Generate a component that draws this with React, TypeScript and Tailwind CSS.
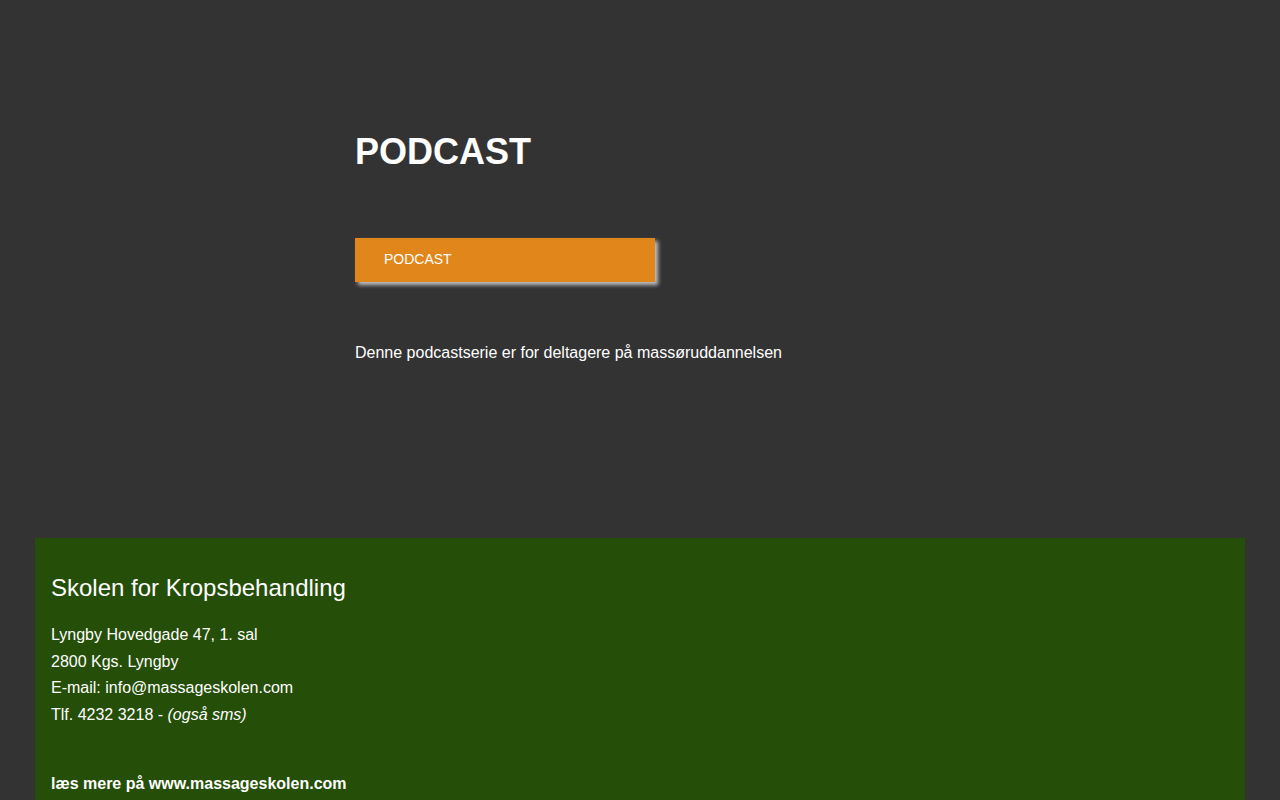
import React from "react";

const App = () => {
  return (
    <div className="min-h-screen bg-[#333333] text-white" style={{ fontFamily: '"Liberation Sans", Arial, sans-serif' }}>
      <main className="mx-auto w-[570px] pt-[132px] pb-[173px]">
        <h1 className="text-[36px] leading-[40px] font-bold">PODCAST</h1>

        <div className="mt-[66px]">
          <a
            href="#"
            className="flex h-[44px] w-[300px] items-center bg-[#e1861a] pb-[2px] pl-[29px] text-[14px] text-white shadow-[3px_3px_4px_rgba(220,220,220,0.85)]"
          >
            PODCAST
          </a>
        </div>

        <p className="mt-[59px] text-[16px] leading-[24px]">
          Denne podcastserie er for deltagere på massøruddannelsen
        </p>
      </main>

      <footer className="mx-[35px] bg-[#254e08] px-4 pt-[34px] pb-[40px]">
        <h2 className="text-[24px] leading-[32px]">Skolen for Kropsbehandling</h2>
        <div className="mt-[18px] text-[16px] leading-[26.6px]">
          <p>Lyngby Hovedgade 47, 1. sal</p>
          <p>2800 Kgs. Lyngby</p>
          <p>E-mail: info@massageskolen.com</p>
          <p>
            Tlf. 4232 3218 - <em>(også sms)</em>
          </p>
        </div>
        <p className="mt-[42.6px] text-[16px] leading-[26.6px] font-bold">
          læs mere på www.massageskolen.com
        </p>
      </footer>
    </div>
  );
};

export default App;
